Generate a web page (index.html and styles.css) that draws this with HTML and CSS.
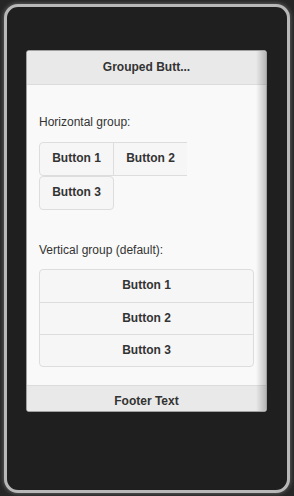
FILE: index.html
```html
<!DOCTYPE html>
<html lang="en">
<head>
    <meta charset="UTF-8">
    <meta name="viewport" content="width=device-width, initial-scale=1.0">
    <title>Grouped Buttons</title>
    <link rel="stylesheet" href="styles.css">
</head>
<body>
    <div class="device">
        <div class="dialog">
            <div class="header">
                <h1>Grouped Butt...</h1>
            </div>
            <div class="content">
                <p class="label">Horizontal group:</p>
                <div class="group-h">
                    <a class="btn first">Button 1</a>
                    <a class="btn middle">Button 2</a>
                    <a class="btn last">Button 3</a>
                </div>
                <p class="label label-v">Vertical group (default):</p>
                <div class="group-v">
                    <a class="btn-v">Button 1</a>
                    <a class="btn-v">Button 2</a>
                    <a class="btn-v">Button 3</a>
                </div>
            </div>
            <div class="footer">Footer Text</div>
        </div>
    </div>
</body>
</html>
```

FILE: styles.css
```css
html, body {
    margin: 0;
    padding: 0;
}
body {
    background-color: #262626;
    font-family: 'Liberation Sans', Arial, sans-serif;
    font-size: 12px;
    color: #333;
    width: 294px;
    height: 496px;
    overflow: hidden;
}
.device {
    margin: 4px 4px 0 4px;
    height: 489px;
    box-sizing: border-box;
    border: 3px solid #b8b8b8;
    border-radius: 14px;
    background-color: #1f1f1f;
    box-shadow: 0 0 5px rgba(255, 255, 255, 0.35);
    padding: 43px 0 0 19px;
}
.dialog {
    position: relative;
    width: 241px;
    height: 362px;
    box-sizing: border-box;
    border: 1px solid #a0a0a0;
    border-radius: 3px;
    overflow: hidden;
    background-color: #f9f9f9;
}
.dialog::after {
    content: "";
    position: absolute;
    top: 0;
    right: 0;
    width: 10px;
    height: 100%;
    background: linear-gradient(to right, rgba(0, 0, 0, 0), rgba(0, 0, 0, 0.22));
}
.header {
    height: 33px;
    background-color: #e9e9e9;
    border-bottom: 1px solid #dcdcdc;
}
.header h1 {
    margin: 0;
    font-size: 12px;
    font-weight: bold;
    line-height: 32px;
    text-align: center;
    white-space: nowrap;
}
.content {
    height: 300px;
    box-sizing: border-box;
    padding: 28px 12px 0 12px;
}
.label {
    margin: 0;
    padding-top: 2px;
    line-height: 15px;
}
.label-v {
    margin-top: 31px;
}
.group-h {
    display: flex;
    flex-wrap: wrap;
    width: 160px;
    margin-top: 12px;
}
.btn {
    display: block;
    box-sizing: border-box;
    width: 75px;
    height: 34px;
    padding-bottom: 2px;
    line-height: 30px;
    text-align: center;
    font-weight: bold;
    background-color: #f6f6f6;
    border: 1px solid #dddddd;
}
.btn.first {
    border-radius: 4px 0 0 4px;
}
.btn.middle {
    width: 74px;
    margin-left: -1px;
    border-right: none;
}
.btn.last {
    border-radius: 4px;
}
.group-v {
    margin-top: 11px;
    border: 1px solid #dddddd;
    border-radius: 4px;
    background-color: #f6f6f6;
}
.btn-v {
    display: block;
    height: 32px;
    box-sizing: border-box;
    padding-bottom: 2px;
    line-height: 30px;
    text-align: center;
    font-weight: bold;
}
.btn-v + .btn-v {
    border-top: 1px solid #dddddd;
}
.footer {
    height: 26px;
    box-sizing: border-box;
    border-top: 1px solid #dcdcdc;
    background-color: #e9e9e9;
    padding-top: 7px;
    line-height: 16px;
    text-align: center;
    font-weight: bold;
    overflow: hidden;
}
```
